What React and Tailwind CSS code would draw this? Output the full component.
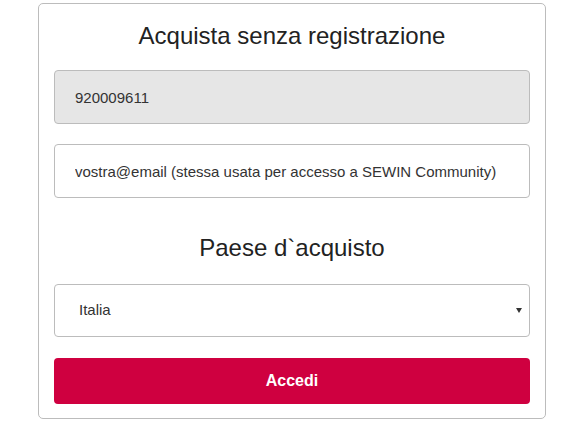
export default function App() {
  return (
    <div className="w-[583px] h-[422px] bg-white pt-[3px] pl-[38px]" style={{ fontFamily: '"Liberation Sans", Arial, sans-serif' }}>
      <div className="w-[508px] border border-[#bcbcbc] rounded-[5px] px-[15px] pt-[18px] pb-[14px]">
        <h2 className="text-[24px] leading-[28px] text-center text-[#222]">Acquista senza registrazione</h2>

        <input
          readOnly
          value="920009611"
          className="mt-[20px] block w-full h-[54px] rounded-[4px] border border-[#bcbcbc] bg-[#e6e6e6] px-5 text-[15px] text-[#333] outline-none"
        />
        <input
          readOnly
          value="vostra@email (stessa usata per accesso a SEWIN Community)"
          className="mt-5 block w-full h-[54px] rounded-[4px] border border-[#bcbcbc] bg-white px-5 text-[15px] text-[#333] outline-none"
        />

        <h2 className="mt-9 text-[24px] leading-[28px] text-center text-[#222]">Paese d`acquisto</h2>

        <div className="relative mt-[22px]">
          <select className="block w-full h-[53px] appearance-none rounded-[4px] border border-[#bcbcbc] bg-white pl-6 text-[15px] text-[#333] outline-none">
            <option>Italia</option>
          </select>
          {/* dropdown caret */}
          <svg className="pointer-events-none absolute right-[8px] top-[24px]" width="6" height="5" viewBox="0 0 6 5">
            <path d="M0 0h6L3 5z" fill="#333" />
          </svg>
        </div>

        <button className="mt-[21px] w-full h-[46px] rounded-[4px] bg-[#cf0040] text-white text-[16px] font-bold">
          Accedi
        </button>
      </div>
    </div>
  )
}
